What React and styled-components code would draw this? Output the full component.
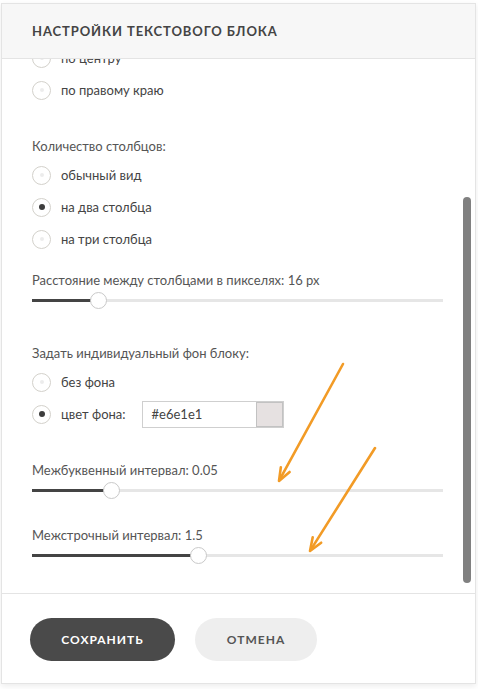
import React from "react";
import styled, { createGlobalStyle } from "styled-components";

const Global = createGlobalStyle`
  html, body { margin: 0; padding: 0; background: #ffffff; }
  body { font-family: Lato, "Open Sans", "Liberation Sans", sans-serif; color: #444; }
  * { box-sizing: border-box; }
`;

const Page = styled.div`
  position: relative;
  width: 478px;
  height: 689px;
  padding: 3px 0 0 1px;
  overflow: hidden;
`;

const Modal = styled.div`
  width: 475px;
  background: #fff;
  border: 1px solid #e4e4e4;
  box-shadow: 0 2px 6px rgba(0, 0, 0, 0.08);
  display: flex;
  flex-direction: column;
`;

const Header = styled.div`
  height: 55px;
  background: #f7f7f7;
  border-bottom: 1px solid #e4e4e4;
  display: flex;
  align-items: center;
  padding-left: 30px;
`;

const Title = styled.h2`
  margin: 0;
  font-size: 13px;
  font-weight: 700;
  letter-spacing: 0.9px;
  text-transform: uppercase;
  color: #444;
`;

const Body = styled.div`
  position: relative;
  height: 535px;
  border-bottom: 1px solid #e4e4e4;
  overflow: hidden;
`;

/* content list, shifted up by the current scroll position */
const Scroller = styled.div`
  margin-top: ${(p) => -p.$offset}px;
  padding: 0 32px 30px 30px;
  display: flex;
  flex-direction: column;
`;

const Thumb = styled.div`
  position: absolute;
  right: 4px;
  top: ${(p) => p.$top}px;
  width: 8px;
  height: ${(p) => p.$height}px;
  border-radius: 4px;
  background: #808080;
`;

const Section = styled.div`
  display: flex;
  flex-direction: column;
  margin-top: ${(p) => p.$gap || 0}px;
`;

const Label = styled.div`
  font-size: 13px;
  line-height: 20px;
  color: #555;
  margin-bottom: ${(p) => (p.$tight ? 0 : 3)}px;
`;

const Row = styled.label`
  height: 32px;
  display: flex;
  align-items: center;
  font-size: 13px;
  color: #444;
`;

const Radio = styled.span`
  width: 19px;
  height: 19px;
  border-radius: 50%;
  border: 1px solid #d3d1cb;
  background: #fff;
  display: flex;
  align-items: center;
  justify-content: center;
  margin-right: 10px;
  flex: none;
  &::after {
    content: "";
    width: ${(p) => (p.$on ? 6 : 4)}px;
    height: ${(p) => (p.$on ? 6 : 4)}px;
    border-radius: 50%;
    background: ${(p) => (p.$on ? "#3d3d3d" : "#ececec")};
  }
`;

const ColorField = styled.div`
  margin-left: 16px;
  width: 142px;
  height: 27px;
  border: 1px solid #cfcfcf;
  display: flex;
  align-items: stretch;
`;

const ColorText = styled.span`
  flex: 1;
  display: flex;
  align-items: center;
  padding-left: 9px;
  font-size: 13px;
  color: #444;
`;

const Swatch = styled.span`
  width: 27px;
  border: 1px solid #c2c2c2;
  background: ${(p) => p.$color};
`;

const Track = styled.div`
  position: relative;
  height: 20px;
  &::before {
    content: "";
    position: absolute;
    left: 0;
    right: 0;
    top: 9px;
    height: 3px;
    background: #e6e6e6;
  }
`;

const Fill = styled.div`
  position: absolute;
  left: 0;
  top: 9px;
  height: 3px;
  background: #444;
`;

const Knob = styled.div`
  position: absolute;
  top: 2px;
  width: 17px;
  height: 17px;
  margin-left: -8px;
  border-radius: 50%;
  background: #fff;
  border: 1px solid #c9c9c9;
`;

const Footer = styled.div`
  height: 89px;
  display: flex;
  align-items: flex-start;
  gap: 20px;
  padding: 24px 0 0 28px;
`;

const Button = styled.button`
  height: 43px;
  width: ${(p) => p.$w}px;
  border: none;
  border-radius: 22px;
  background: ${(p) => (p.$primary ? "#4a4a4a" : "#eeeeee")};
  color: ${(p) => (p.$primary ? "#ffffff" : "#555555")};
  font-family: inherit;
  font-size: 12px;
  font-weight: 700;
  letter-spacing: 1px;
  text-transform: uppercase;
  cursor: pointer;
`;

const Marks = styled.svg`
  position: absolute;
  left: 0;
  top: 0;
  pointer-events: none;
`;

function Slider({ value }) {
  const pct = `${value * 100}%`;
  return (
    <Track>
      <Fill style={{ width: pct }} />
      <Knob style={{ left: pct }} />
    </Track>
  );
}

function Option({ on, children, extra }) {
  return (
    <Row>
      <Radio $on={on} />
      {children}
      {extra}
    </Row>
  );
}

function Arrow({ x1, y1, x2, y2 }) {
  const dx = x2 - x1;
  const dy = y2 - y1;
  const len = Math.hypot(dx, dy);
  const ux = dx / len;
  const uy = dy / len;
  const bx = x2 - ux * 13;
  const by = y2 - uy * 13;
  const px = -uy;
  const py = ux;
  const a = `${bx + px * 5},${by + py * 5}`;
  const b = `${bx - px * 5},${by - py * 5}`;
  return (
    <g stroke="#f29b26" strokeWidth="2.6" strokeLinecap="round" strokeLinejoin="round">
      <line x1={x1} y1={y1} x2={x2 - ux * 4} y2={y2 - uy * 4} />
      <polyline points={`${a} ${x2},${y2} ${b}`} fill="none" />
    </g>
  );
}

export default function App() {
  return (
    <Page>
      <Global />
      <Modal>
        <Header>
          <Title>Настройки текстового блока</Title>
        </Header>
        <Body>
          <Scroller $offset={17}>
            <Section>
              <Option>по центру</Option>
              <Option>по правому краю</Option>
            </Section>
            <Section $gap={30}>
              <Label>Количество столбцов:</Label>
              <Option>обычный вид</Option>
              <Option on>на два столбца</Option>
              <Option>на три столбца</Option>
            </Section>
            <Section $gap={15}>
              <Label $tight>Расстояние между столбцами в пикселях: 16 px</Label>
              <Slider value={0.16} />
            </Section>
            <Section $gap={33}>
              <Label>Задать индивидуальный фон блоку:</Label>
              <Option>без фона</Option>
              <Option
                on
                extra={
                  <ColorField>
                    <ColorText>#e6e1e1</ColorText>
                    <Swatch $color="#e6e1e1" />
                  </ColorField>
                }
              >
                цвет фона:
              </Option>
            </Section>
            <Section $gap={30}>
              <Label $tight>Межбуквенный интервал: 0.05</Label>
              <Slider value={0.193} />
            </Section>
            <Section $gap={25}>
              <Label $tight>Межстрочный интервал: 1.5</Label>
              <Slider value={0.405} />
            </Section>
          </Scroller>
          <Thumb $top={138} $height={386} />
        </Body>
        <Footer>
          <Button $primary $w={145}>Сохранить</Button>
          <Button $w={122}>Отмена</Button>
        </Footer>
      </Modal>
      <Marks width="478" height="689" viewBox="0 0 478 689">
        <Arrow x1={343} y1={364} x2={279} y2={481} />
        <Arrow x1={375} y1={448} x2={310} y2={551} />
      </Marks>
    </Page>
  );
}
